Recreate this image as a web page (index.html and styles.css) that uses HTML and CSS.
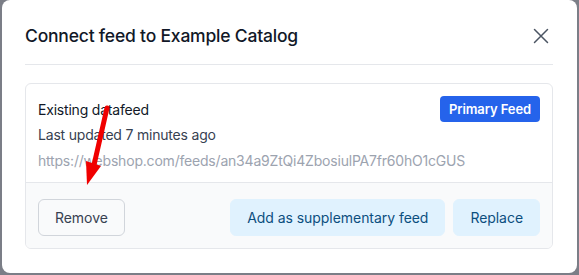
FILE: index.html
```html
<!DOCTYPE html>
<html lang="en">
<head>
<meta charset="utf-8">
<title>Connect feed</title>
<link rel="stylesheet" href="styles.css">
</head>
<body>
<div class="modal">
  <div class="modal-header">
    <h2 class="modal-title">Connect feed to Example Catalog</h2>
    <button class="close-btn" aria-label="Close">
      <svg width="16" height="16" viewBox="0 0 16 16" fill="none" stroke="#4b5563" stroke-width="1.5" stroke-linecap="round"><path d="M1.5 1.5 L14.5 14.5 M14.5 1.5 L1.5 14.5"/></svg>
    </button>
  </div>
  <div class="card">
    <div class="card-body">
      <div class="row-top">
        <span class="feed-name">Existing datafeed</span>
        <span class="badge">Primary Feed</span>
      </div>
      <div class="updated">Last updated 7 minutes ago</div>
      <div class="url">https://webshop.com/feeds/an34a9ZtQi4ZbosiulPA7fr60hO1cGUS</div>
    </div>
    <div class="card-footer">
      <button class="btn btn-outline">Remove</button>
      <div class="actions">
        <button class="btn btn-soft">Add as supplementary feed</button>
        <button class="btn btn-soft">Replace</button>
      </div>
    </div>
  </div>
  <svg class="arrow" width="40" height="90" viewBox="0 0 40 90">
    <line x1="24" y1="3" x2="11" y2="60" stroke="#f00000" stroke-width="5" stroke-linecap="round"/>
    <polygon points="3,56 18,61 4,80" fill="#f00000"/>
  </svg>
</div>
</body>
</html>
```
FILE: styles.css
```css
html, body {
  margin: 0;
  padding: 0;
}
body {
  background: #7b7e87;
  width: 579px;
  height: 275px;
  overflow: hidden;
  font-family: Inter, "Liberation Sans", sans-serif;
}
.modal {
  position: relative;
  margin-left: 2px;
  width: 575px;
  height: 273px;
  box-sizing: border-box;
  background: #ffffff;
  border-radius: 8px;
  padding: 0 24px 24px 23px;
}
.modal-header {
  display: flex;
  align-items: center;
  justify-content: space-between;
  height: 65px;
  box-sizing: border-box;
  padding-top: 7px;
  border-bottom: 1px solid #e5e7eb;
}
.modal-title {
  margin: 0;
  font-size: 17.5px;
  font-weight: 500;
  color: #111827;
  letter-spacing: -0.2px;
}
.close-btn {
  border: 0;
  background: none;
  padding: 0;
  margin-right: 4px;
  display: flex;
}
.card {
  margin-top: 18px;
  border: 1px solid #e5e7eb;
  border-radius: 6px;
  overflow: hidden;
}
.card-body {
  padding: 12px 12px 8px 12px;
  border-bottom: 1px solid #e5e7eb;
  letter-spacing: -0.2px;
}
.row-top {
  display: flex;
  justify-content: space-between;
  align-items: center;
  height: 26px;
}
.feed-name {
  font-size: 14px;
  color: #111827;
}
.badge {
  background: #2563eb;
  color: #ffffff;
  font-size: 13px;
  font-weight: 600;
  letter-spacing: -0.1px;
  border-radius: 4px;
  padding: 0 9px;
  height: 26px;
  line-height: 26px;
}
.updated {
  font-size: 14px;
  color: #374151;
  line-height: 26px;
}
.url {
  font-size: 14px;
  color: #9ca3af;
  line-height: 26px;
}
.card-footer {
  background: #f9fafb;
  display: flex;
  justify-content: space-between;
  padding: 16px 12px 12px 12px;
}
.actions {
  display: flex;
  gap: 8px;
}
.btn {
  font-family: inherit;
  font-size: 14px;
  letter-spacing: -0.05px;
  height: 37px;
  border-radius: 6px;
  padding: 0 16px;
  cursor: pointer;
}
.btn-outline {
  background: #f9fafb;
  border: 1px solid #d1d5db;
  color: #374151;
}
.btn-soft {
  background: #e0f2fe;
  border: 1px solid #e0f2fe;
  color: #0c4f7e;
}
.arrow {
  position: absolute;
  left: 81px;
  top: 105px;
}
```
